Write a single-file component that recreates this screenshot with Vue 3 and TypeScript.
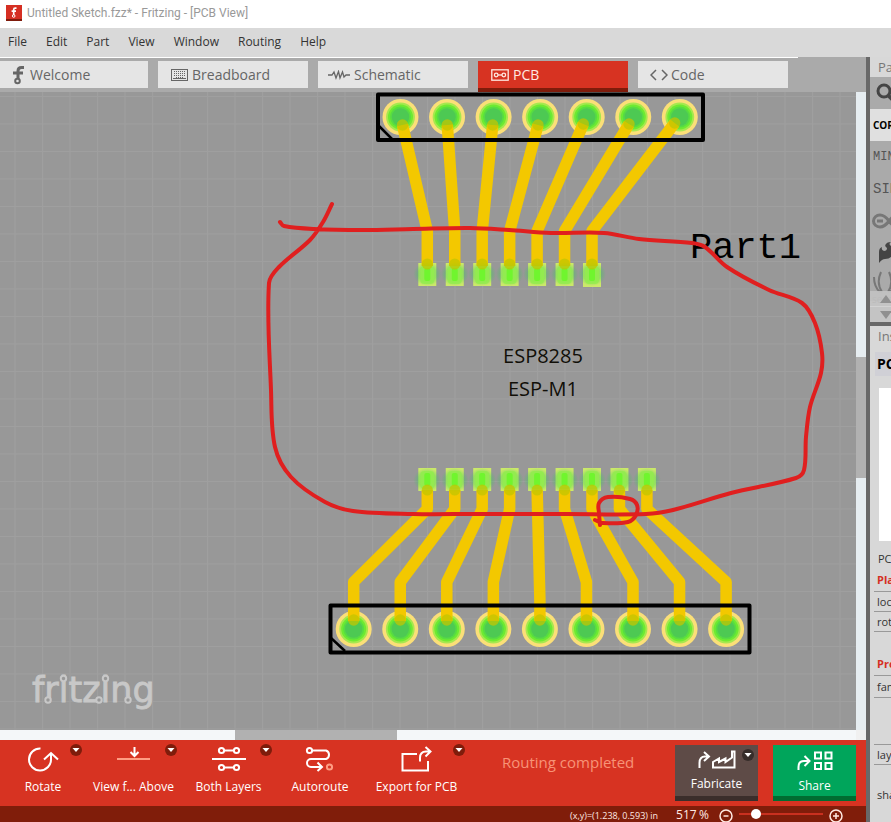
<script setup lang="ts">
import { ref } from 'vue'

type Point = [number, number]

const menus = ['File', 'Edit', 'Part', 'View', 'Window', 'Routing', 'Help']
const tabs = ['Welcome', 'Breadboard', 'Schematic', 'PCB', 'Code']
const activeTab = ref('PCB')
const zoom = ref(517)
const slider = ref(16)

const tools = [
  { id: 'rotate', label: 'Rotate', menu: true },
  { id: 'view', label: 'View f... Above', menu: true },
  { id: 'layers', label: 'Both Layers', menu: true },
  { id: 'autoroute', label: 'Autoroute', menu: false },
  { id: 'export', label: 'Export for PCB', menu: true },
]

const placement = ['location', 'rotation']

const range = (count: number, start: number, step: number): number[] =>
  Array.from({ length: count }, (_, i) => start + i * step)

const topHoles = range(7, 400.5, 46.55)
const bottomHoles = range(9, 353.7, 46.55)
const topPads = range(7, 427.3, 27.45)
const bottomPads = range(9, 427.3, 27.45)
const topStarts: Point[] = [
  [402.5, 125], [447.3, 125], [492.7, 125], [538, 125], [583.3, 124], [629, 124], [674.7, 123],
]

const topTraces = topPads.map((x, i) => `M${topStarts[i][0]} ${topStarts[i][1]}L${x} 231V266`)
const bottomTraces = bottomPads.map((x, i) =>
  i === 4 ? `M${x} 490L${bottomHoles[i]} 600V621` : `M${x} 490V509L${bottomHoles[i]} 582V621`,
)

// Smooth curve through freehand points
function smooth(points: Point[]): string {
  let d = `M${points[0][0]} ${points[0][1]}`
  for (let i = 0; i < points.length - 1; i++) {
    const a = points[Math.max(i - 1, 0)]
    const b = points[i]
    const c = points[i + 1]
    const e = points[Math.min(i + 2, points.length - 1)]
    const reach = Math.hypot(c[0] - b[0], c[1] - b[1])
    const t1 = reach / (Math.hypot(c[0] - a[0], c[1] - a[1]) || 1) / 3
    const t2 = reach / (Math.hypot(e[0] - b[0], e[1] - b[1]) || 1) / 3
    d += `C${b[0] + (c[0] - a[0]) * t1} ${b[1] + (c[1] - a[1]) * t1} ${c[0] - (e[0] - b[0]) * t2} ${c[1] - (e[1] - b[1]) * t2} ${c[0]} ${c[1]}`
  }
  return d
}

const outline = smooth([
  [280, 222], [284, 226], [314, 229], [363, 230], [413, 229], [470, 228], [509, 230], [551, 233],
  [604, 233], [639, 239], [692, 243], [705, 247], [727, 267], [769, 290], [802, 303], [815, 323],
  [822, 353], [821, 373], [810, 407], [806, 437], [804, 470], [796, 478], [731, 493], [673, 510],
  [646, 514], [566, 514], [474, 514], [413, 514], [353, 511], [325, 502], [291, 477], [275, 447],
  [271, 390], [269, 283], [279, 267], [310, 240], [323, 222], [332, 204],
])
const loop = smooth([
  [600, 525], [599, 513], [599, 503], [608, 497], [630, 499], [637, 505], [636, 515], [628, 522], [603, 523], [595, 520],
])
</script>

<template>
  <div class="app">
    <header class="titlebar">
      <svg class="app-icon" viewBox="0 0 16 16" aria-hidden="true">
        <rect width="16" height="16" fill="#d52f23" />
        <rect y="14" width="16" height="2" fill="#7f1b0c" />
        <path d="M10.5 3.2H9.2Q7.7 3.2 7.7 4.7V10M5.6 6.2H10" fill="none" stroke="#fff" stroke-width="1.7" />
        <circle cx="7.7" cy="11" r="1.3" fill="none" stroke="#fff" />
      </svg>
      <span>Untitled Sketch.fzz* - Fritzing - [PCB View]</span>
    </header>

    <nav class="menubar" aria-label="Main menu">
      <button v-for="m in menus" :key="m" type="button">{{ m }}</button>
    </nav>

    <div class="workspace">
      <main class="main">
        <div class="tabs" role="tablist">
          <button
            v-for="t in tabs" :key="t" type="button" role="tab" class="tab"
            :class="{ active: t === activeTab }" :aria-selected="t === activeTab" @click="activeTab = t"
          >
            <svg v-if="t === 'Welcome'" width="14" height="20" viewBox="0 0 14 20" class="line heavy">
              <path d="M12 2.5H9.5Q6 2.5 6 6V14M1 8H11" /><circle cx="5.5" cy="16" r="2.3" stroke-width="2" />
            </svg>
            <svg v-else-if="t === 'Breadboard'" width="17" height="12" viewBox="0 0 17 12" class="line">
              <rect x=".5" y=".5" width="16" height="11" stroke-width="1" />
              <path d="M3 2.500H15M3 4.500H15M3 6.500H15M5 8.500H13" stroke-dasharray="1 1" stroke-width="1" />
              <path d="M2 9.500H15" stroke-width="1" />
            </svg>
            <svg v-else-if="t === 'Schematic'" width="22" height="10" viewBox="0 0 22 10" class="line">
              <path d="M0 5H4L6 2L8 8L10.5 1.5L12 8L14.5 2L16 7L18 5H22" />
            </svg>
            <svg v-else-if="t === 'PCB'" width="18" height="12" viewBox="0 0 18 12" class="line">
              <rect x=".8" y=".8" width="16.4" height="10.4" />
              <circle cx="5.2" cy="6" r="1.8" /><circle cx="12.8" cy="6" r="1.8" /><path d="M7 6H11" />
            </svg>
            <svg v-else width="18" height="12" viewBox="0 0 18 12" class="line">
              <path d="M6 1L1 6L6 11M12 1L17 6L12 11" stroke-width="1.5" />
            </svg>
            <span>{{ t }}</span>
          </button>
        </div>

        <div class="canvas-area">
          <svg class="board" viewBox="0 92 856 638" preserveAspectRatio="xMinYMin slice" role="img" aria-label="PCB layout">
            <defs>
              <pattern id="grid" x="14.5" y="96" width="27.5" height="27.5" patternUnits="userSpaceOnUse">
                <path d="M.5 0V27.5M0 .5H27.5" stroke="#9f9f9f" stroke-width="1" fill="none" />
              </pattern>
              <radialGradient id="glow">
                <stop offset="0" stop-color="#2fd04c" stop-opacity=".4" />
                <stop offset=".65" stop-color="#2fd04c" stop-opacity=".34" />
                <stop offset="1" stop-color="#35c858" stop-opacity="0" />
              </radialGradient>
            </defs>
            <rect x="0" y="92" width="856" height="638" fill="#989898" />
            <rect x="0" y="92" width="856" height="638" fill="url(#grid)" />

            <g class="logo">
              <text x="32" y="702">fritzing</text>
              <g>
                <circle cx="48" cy="700" r="2.7" /><circle cx="63.500" cy="678.500" r="2.7" />
                <circle cx="99" cy="700" r="2.7" /><circle cx="105.500" cy="678.500" r="2.7" />
                <circle cx="128" cy="700" r="2.7" />
              </g>
            </g>

            <rect v-for="(x, i) in topPads" :key="'tp' + i" class="pad" :x="x - 9" y="263" width="18" :height="i === 6 ? 24 : 23" />
            <rect v-for="(x, i) in bottomPads" :key="'bp' + i" class="pad" :x="x - 9" y="468" width="18" height="23" />
            <g v-for="(x, i) in topHoles" :key="'th' + i">
              <circle :cx="x" cy="117" r="18" fill="#fbdf78" />
              <circle :cx="x" cy="117" r="14.4" fill="#a6e84f" />
              <circle :cx="x" cy="117" r="12.5" fill="#6deb31" />
              <circle :cx="x" cy="117" r="10.500" fill="#57dc42" />
              <circle :cx="x" cy="117" r="8.700" fill="#4dc953" />
            </g>
            <g v-for="(x, i) in bottomHoles" :key="'bh' + i">
              <circle :cx="x" cy="629" r="18" fill="#fbdf78" />
              <circle :cx="x" cy="629" r="14.4" fill="#a6e84f" />
              <circle :cx="x" cy="629" r="12.5" fill="#6deb31" />
              <circle :cx="x" cy="629" r="10.500" fill="#57dc42" />
              <circle :cx="x" cy="629" r="8.700" fill="#4dc953" />
            </g>

            <path v-for="(d, i) in [...topTraces, ...bottomTraces]" :key="'tr' + i" class="trace" :d="d" />

            <g v-for="(x, i) in topPads" :key="'tg' + i">
              <ellipse :cx="x" cy="274" rx="14" ry="12" fill="url(#glow)" />
              <rect :x="x - 7" y="266" width="14" height="18" rx="4" fill="#92ee4c" opacity=".8" />
              <rect :x="x - 3" y="268" width="6" height="13" rx="2" fill="#70f52e" />
              <circle :cx="x" cy="264" r="5.500" class="joint" />
              <circle :cx="topStarts[i][0]" :cy="topStarts[i][1]" r="5.700" class="joint" />
            </g>
            <g v-for="(x, i) in bottomPads" :key="'bg' + i">
              <ellipse :cx="x" cy="480" rx="14" ry="12" fill="url(#glow)" />
              <rect :x="x - 7" y="471" width="14" height="18" rx="4" fill="#92ee4c" opacity=".8" />
              <rect :x="x - 3" y="473" width="6" height="13" rx="2" fill="#70f52e" />
              <circle :cx="x" cy="490" r="5.500" class="joint" />
              <circle :cx="bottomHoles[i]" cy="620" r="5.700" class="joint" />
            </g>

            <g class="silk">
              <rect x="378" y="94.500" width="325" height="45.500" />
              <path d="M379 126L392 139" stroke-width="2.500" />
              <rect x="330.500" y="605.500" width="419" height="47" />
              <path d="M331 638L345 651" stroke-width="2.500" />
            </g>

            <text class="part-label" x="690" y="258">Part1</text>
            <text class="chip-label" x="543" y="363">ESP8285</text>
            <text class="chip-label" x="543" y="396">ESP-M1</text>

            <path class="ink" :d="outline" />
            <path class="ink" :d="loop" />
          </svg>
          <div class="vscroll"><i /><b /><i /></div>
          <div class="hscroll"><i /><b /><i /></div>
          <div class="corner" />
        </div>

        <footer class="toolbar">
          <button v-for="t in tools" :key="t.id" type="button" class="tool" :class="t.id">
            <svg v-if="t.id === 'rotate'" width="34" height="26" viewBox="0 0 34 26" class="glyph">
              <path d="M14.500 2.500A11 11 0 1 0 25 13V8" /><path d="M18 13.500L25 7L32 13.500" />
            </svg>
            <svg v-else-if="t.id === 'view'" width="34" height="26" viewBox="0 0 34 26" class="glyph">
              <path d="M17.500 1V9M13.500 6L17.500 10L21.500 6" /><path d="M0 13H33" stroke="#ff9d83" />
            </svg>
            <svg v-else-if="t.id === 'layers'" width="34" height="26" viewBox="0 0 34 26" class="glyph">
              <path d="M0 13H34M12 4.500H22M12 21.500H22" />
              <circle cx="9.500" cy="4.500" r="2.600" /><circle cx="24.500" cy="4.500" r="2.600" />
              <circle cx="9.500" cy="21.500" r="2.600" /><circle cx="24.500" cy="21.500" r="2.600" />
            </svg>
            <svg v-else-if="t.id === 'autoroute'" width="34" height="26" viewBox="0 0 34 26" class="glyph">
              <circle cx="6.500" cy="4.500" r="2.600" />
              <path d="M9 4.500H23A4.500 4.500 0 0 1 23 13H8A4 4 0 0 0 8 21H18M14.500 16.500L19 21L14.500 25" />
              <circle cx="26.500" cy="21" r="2.600" stroke="#ff9d83" />
            </svg>
            <svg v-else width="34" height="26" viewBox="0 0 34 26" class="glyph">
              <path d="M17 8H2.500V24.500H28V15" /><path d="M20 15.500V12Q20 5.500 26 5.500H30M25.500 1L30.500 5.500L25.500 10.500" />
            </svg>
            <span>{{ t.label }}</span>
            <svg v-if="t.menu" class="badge" viewBox="0 0 12 12"><circle cx="6" cy="6" r="6" /><path d="M2.500 4H9.500L6 8Z" /></svg>
          </button>

          <p class="message">Routing completed</p>

          <button type="button" class="action fabricate">
            <svg width="38" height="20" viewBox="0 0 38 20" class="glyph">
              <path d="M1.500 18V13Q1.500 6.500 7 6.500H10M6 2L11 6.500L6 11" />
              <path d="M15 17.500V12L21 8.500V12L27.500 8.500V12L34 7.500V1.500H36.500V17.500Z" />
            </svg>
            <span>Fabricate</span>
            <svg class="badge" viewBox="0 0 12 12"><circle cx="6" cy="6" r="6" /><path d="M2.500 4H9.500L6 8Z" /></svg>
          </button>
          <button type="button" class="action share">
            <svg width="36" height="20" viewBox="0 0 36 20" class="glyph">
              <path d="M1.500 19V16Q1.500 10 7 10H11M7.500 5L12.500 10L7.500 15" />
              <path d="M18 1.500H24V7.500H18ZM28.500 1.500H34.500V7.500H28.500ZM18 12H24V18H18ZM28.500 12H34.500V18H28.500Z" />
            </svg>
            <span>Share</span>
          </button>
        </footer>

        <div class="status">
          <span class="coords">(x,y)=(1.238, 0.593) in</span>
          <label class="zoom"><input v-model="zoom" type="text" aria-label="Zoom"><span>%</span></label>
          <button type="button" aria-label="Zoom out">
            <svg width="14" height="14" viewBox="0 0 14 14"><circle cx="7" cy="7" r="6" /><path d="M4.500 7H9.500" /></svg>
          </button>
          <input v-model="slider" class="slider" type="range" min="0" max="100" aria-label="Zoom level">
          <button type="button" aria-label="Zoom in">
            <svg width="14" height="14" viewBox="0 0 14 14"><circle cx="7" cy="7" r="6" /><path d="M4 7H10M7 4V10" /></svg>
          </button>
        </div>
      </main>

      <aside class="side">
        <section class="parts">
          <h2>Parts</h2>
          <button type="button" class="bin search" aria-label="Search parts">
            <svg width="20" height="20" viewBox="0 0 20 20"><circle cx="8" cy="8" r="6" /><path d="M12 12L18 18" stroke-width="4" /></svg>
          </button>
          <button type="button" class="bin core">CORE</button>
          <button type="button" class="bin word">MINE</button>
          <button type="button" class="bin word wide">SIK</button>
          <button type="button" class="bin" aria-label="Arduino">
            <svg width="36" height="16" viewBox="0 0 36 16"><path d="M17 8C13 2.500 10.500 2 8 2A6.500 6 0 0 0 8 14C10.500 14 13 13.500 17 8C21 2.500 23.500 2 26 2A6.500 6 0 0 1 26 14C23.500 14 21 13.500 17 8M5 8H11" /></svg>
          </button>
          <button type="button" class="bin flame" aria-label="SparkFun">
            <svg width="20" height="24" viewBox="0 0 20 24"><path class="solid" d="M6 22V11Q6 7 9 6Q8 9 11 10Q14 10 14 7Q11 5 13 3Q14 1 18 1Q15 3 18 5Q20 8 20 12Q19 18 12 18Q9 18 6 22Z" /></svg>
          </button>
          <button type="button" class="bin leaf">
            <svg width="30" height="26" viewBox="0 0 30 26"><path d="M2 8Q2 18 8 23M9 3Q4 14 10 23M17 3Q22 14 16 23M24 8Q24 18 18 23" /></svg>
            <span>seeed</span>
          </button>
          <div class="arrows">
            <button type="button" aria-label="Scroll up"><svg width="12" height="8" viewBox="0 0 12 8"><path d="M0 8L6 0L12 8Z" /></svg></button>
            <button type="button" aria-label="Scroll down"><svg width="12" height="8" viewBox="0 0 12 8"><path d="M0 0H12L6 8Z" /></svg></button>
          </div>
        </section>
        <section class="inspector">
          <h2>Inspector</h2>
          <h3>PCB</h3>
          <div class="preview" />
          <p class="caption">PCB</p>
          <h4>Placement</h4>
          <div v-for="p in placement" :key="p" class="row">{{ p }}</div>
          <h4 class="props">Properties</h4>
          <div class="row tall">family</div>
          <div class="row gap">layer</div>
          <div class="row shape">shape</div>
        </section>
      </aside>
    </div>
  </div>
</template>

<style>
body {
  margin: 0;
  overflow: hidden;
}
</style>

<style scoped>
.app {
  display: flex;
  flex-direction: column;
  height: 100vh;
  overflow: hidden;
  background: #d8d8d8;
  color: #333;
  font: 12px/16px "Open Sans", "Noto Sans", sans-serif;
}
button {
  margin: 0;
  padding: 0;
  border: 0;
  background: none;
  color: inherit;
  font: inherit;
}
h2, h3, h4, p { margin: 0; }
.titlebar {
  display: flex;
  align-items: center;
  gap: 5px;
  flex: none;
  height: 28px;
  padding: 0 6px 3px;
  box-sizing: border-box;
  background: #fff;
  color: #999;
  font-family: Roboto, "Open Sans", sans-serif;
}
.app-icon { width: 16px; height: 16px; }
.menubar {
  display: flex;
  gap: 19px;
  flex: none;
  height: 29px;
  padding: 0 0 2px 8px;
  box-sizing: border-box;
  background: #d9d9d9;
}
.workspace { display: flex; flex: 1; min-height: 0; }
.main { display: flex; flex: 1; flex-direction: column; min-width: 0; }
.tabs {
  display: flex;
  align-items: flex-start;
  gap: 10px;
  flex: none;
  height: 35px;
  padding: 4px 68px 0 0;
  margin-left: -2px;
  box-sizing: border-box;
  background: linear-gradient(#fff, #fff) 0 0 / 800px 1px no-repeat, #aaa;
}
.tab {
  display: flex;
  align-items: center;
  gap: 4px;
  flex: 0 1 150px;
  height: 27px;
  padding-left: 13px;
  box-sizing: border-box;
  background: #e5e5e5;
  color: #666;
  font-size: 14px;
}
.tab:first-child { padding-left: 14px; }
.tab:nth-child(3) { padding-left: 10px; }
.tab:nth-child(5) { padding-left: 12px; gap: 3px; }
.tab.active { background: #d73322; color: #ffe9e2; box-shadow: 0 4px #7f1c0b; }
.line { fill: none; stroke: currentColor; stroke-width: 1.3; }
.heavy { stroke-width: 3; }
.canvas-area {
  display: grid;
  grid-template-columns: minmax(0, 1fr) 10px;
  grid-template-rows: minmax(0, 1fr) 10px;
  flex: 1;
  min-height: 0;
}
.board { display: block; width: 100%; height: 100%; }
.vscroll, .hscroll { display: flex; background: #e6edf1; }
.vscroll { flex-direction: column; }
.vscroll i:first-child { flex: 265; }
.vscroll b { flex: 121; background: #b1b1b1; }
.vscroll i:last-child { flex: 252; }
.hscroll { background: #f4f7f9; }
.hscroll i:first-child { flex: 235; }
.hscroll b { flex: 162; background: #b1b1b1; }
.hscroll i:last-child { flex: 459; }
.corner { background: #f0f0f0; }
.trace { fill: none; stroke: #f3c800; stroke-width: 11.5; stroke-linejoin: round; }
.joint { fill: #c2c600; opacity: .75; }
.pad { fill: #cbe96a; }
.silk { fill: none; stroke: #000; stroke-width: 4; stroke-linejoin: round; }
.part-label { font: 37px "Liberation Mono", monospace; fill: #000; }
.chip-label { font: 20px "Open Sans", sans-serif; text-anchor: middle; fill: #110f08; }
.ink { fill: none; stroke: #e01f1f; stroke-width: 4; stroke-linecap: round; stroke-linejoin: round; }
.logo text { font: 35px "DejaVu Sans", sans-serif; fill: #c8c8c8; stroke: #c8c8c8; stroke-width: .8; }
.logo circle { fill: #989898; stroke: #c8c8c8; stroke-width: 2; }
.toolbar {
  display: flex;
  flex: none;
  height: 66px;
  padding-right: 10px;
  background: #d73322;
  color: #fff;
}
.tool {
  position: relative;
  display: flex;
  flex: none;
  flex-direction: column;
  align-items: center;
  gap: 7px;
  width: 95px;
  padding-top: 6px;
  white-space: nowrap;
}
.tool.rotate { width: 86px; }
.tool.autoroute { width: 88px; }
.tool.export { width: 105px; }
.glyph { fill: none; stroke: #fff; stroke-width: 2; }
.badge { position: absolute; top: 4px; right: 4px; width: 12px; height: 12px; fill: #7f1c0b; }
.badge path { fill: #fff; }
.message {
  flex: 1;
  padding: 12px 0 0 33px;
  color: #f79377;
  font-size: 15px;
  line-height: 20px;
  white-space: nowrap;
}
.action {
  position: relative;
  display: flex;
  flex: none;
  flex-direction: column;
  align-items: center;
  gap: 6px;
  width: 83px;
  height: 56px;
  margin: 5px 0 0 15px;
  padding-top: 5px;
}
.fabricate { background: #5e4b47; box-shadow: inset 0 -5px #3b2e2b; }
.fabricate .badge { fill: #372d2a; }
.share { background: #00a55b; box-shadow: inset 0 -5px #006d31; gap: 7px; padding-top: 6px; }
.status {
  display: flex;
  align-items: flex-start;
  justify-content: flex-end;
  gap: 6px;
  flex: none;
  height: 16px;
  padding: 0 23px 0 0;
  background: #801d0a;
  color: #ffe9e2;
}
.coords { margin-right: 12px; padding-top: 4px; font-size: 9px; line-height: 12px; }
.zoom { display: flex; gap: 1px; padding-top: 2px; line-height: 14px; }
.zoom input {
  width: 22px;
  height: 14px;
  padding: 0;
  border: 0;
  background: none;
  color: inherit;
  font: inherit;
}
.zoom span { margin-right: 4px; }
.status button { height: 14px; margin: 3px 0 0; }
.status button svg { display: block; fill: none; stroke: #ffe9e2; stroke-width: 1.5; }
.slider { appearance: none; width: 84px; height: 16px; margin: 0; background: none; }
.slider::-webkit-slider-runnable-track { height: 2px; background: #c9301f; }
.slider::-webkit-slider-thumb { appearance: none; width: 10px; height: 10px; margin-top: -4px; border-radius: 50%; background: #fff; }
.side {
  flex: 0 0 21px;
  border-left: 4px solid #686868;
  overflow: hidden;
  background: #d8d8d8;
}
.side h2 { height: 20px; padding-left: 8px; color: #777; font-size: 13px; font-weight: 400; line-height: 20px; }
.parts { height: 265px; overflow: hidden; border-bottom: 4px solid #686868; }
.bin { display: flex; align-items: center; height: 32px; width: 60px; padding-left: 2px; background: #aaa; }
.bin svg { flex: none; fill: none; stroke: #777; stroke-width: 3; }
.bin .solid { fill: #444; stroke: none; }
.search { padding-left: 6px; }
.search svg { stroke: #444; }
.core { padding-left: 3px; background: #e0e0e0; color: #000; font-weight: 700; font-size: 10px; }
.word { padding-left: 3px; color: #555; font: 12px "Liberation Mono", monospace; }
.wide { font-size: 14px; }
.flame { padding-left: 3px; }
.leaf { height: 32px; flex-direction: column; align-items: flex-start; color: #777; font-size: 10px; line-height: 8px; }
.leaf svg { stroke-width: 2; }
.arrows { position: relative; display: flex; flex-direction: column; gap: 1px; width: 31px; margin-top: -10px; background: rgba(208, 208, 208, .7); }
.arrows button { height: 15px; background: rgba(190, 190, 190, .7); }
.arrows svg { display: block; margin: auto; fill: #909090; }
.inspector h3 { margin: 6px 0 0 5px; padding-left: 2px; height: 24px; background: #d0d0d6; color: #000; font-size: 14px; line-height: 24px; }
.preview { height: 153px; width: 153px; margin: 12px 0 10px 9px; background: #fff; }
.caption { padding-left: 8px; font-size: 11px; }
.inspector h4 { padding: 5px 0 3px 7px; color: #d52f23; font-size: 11px; line-height: 16px; }
.row { width: 80px; height: 19px; margin-left: 4px; padding-left: 3px; border-bottom: 1px solid #999; font-size: 11px; line-height: 19px; }
.inspector .row:nth-of-type(2) { border-top: 1px solid #999; }
.inspector .props { padding-top: 24px; }
.row.tall { height: 21px; border-top: 1px solid #999; line-height: 21px; }
.row.gap { margin-top: 46px; border-top: 1px solid #999; }
.row.shape { margin-top: 20px; border: 0; }
</style>
